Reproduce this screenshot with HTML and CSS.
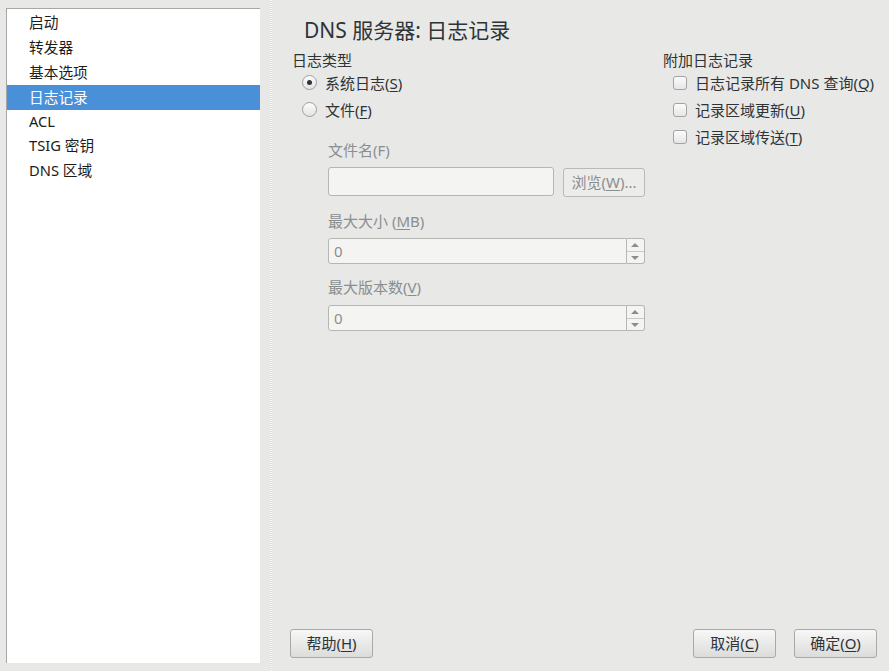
FILE: index.html
```html
<!DOCTYPE html>
<html>
<head>
<meta charset="utf-8">
<link rel="stylesheet" href="styles.css">
</head>
<body>
<div class="window">
  <div class="sidebar">
    <ul class="tree">
      <li>启动</li>
      <li>转发器</li>
      <li>基本选项</li>
      <li class="sel">日志记录</li>
      <li class="latin">ACL</li>
      <li>TSIG 密钥</li>
      <li>DNS 区域</li>
    </ul>
  </div>
  <div class="splitter"></div>
  <div class="main">
    <h1 class="title">DNS 服务器: 日志记录</h1>
    <div class="cols">
      <div class="col-left">
        <div class="group-label">日志类型</div>
        <div class="opt">
          <span class="radio on"></span><span>系统日志(<u>S</u>)</span>
        </div>
        <div class="opt">
          <span class="radio"></span><span>文件(<u>F</u>)</span>
        </div>
        <div class="file-box">
          <div class="flabel">文件名(F)</div>
          <div class="frow">
            <div class="input wide"></div>
            <div class="btn dis">浏览(<u>W</u>)...</div>
          </div>
          <div class="flabel">最大大小 (<u>M</u>B)</div>
          <div class="frow spinrow">
            <div class="input spin">0</div>
            <div class="spinbtn"><span class="up"></span><span class="down"></span></div>
          </div>
          <div class="flabel last">最大版本数(<u>V</u>)</div>
          <div class="frow">
            <div class="input spin">0</div>
            <div class="spinbtn"><span class="up"></span><span class="down"></span></div>
          </div>
        </div>
      </div>
      <div class="col-right">
        <div class="group-label">附加日志记录</div>
        <div class="chk"><span class="box"></span><span>日志记录所有 DNS 查询(<u>Q</u>)</span></div>
        <div class="chk"><span class="box"></span><span>记录区域更新(<u>U</u>)</span></div>
        <div class="chk"><span class="box"></span><span>记录区域传送(<u>T</u>)</span></div>
      </div>
    </div>
    <div class="footer">
      <div class="btn">帮助(<u>H</u>)</div>
      <div class="right-btns">
        <div class="btn">取消(<u>C</u>)</div>
        <div class="btn">确定(<u>O</u>)</div>
      </div>
    </div>
  </div>
</div>
</body>
</html>
```
FILE: styles.css
```css
* { box-sizing: border-box; }
html, body {
  margin: 0;
  padding: 0;
  width: 889px;
  height: 671px;
  overflow: hidden;
  background: #e8e8e7;
  font-family: "Noto Sans", "Noto Sans CJK SC", sans-serif;
  font-size: 15px;
  color: #2e3436;
}
u { text-decoration: underline; text-underline-offset: 2px; text-decoration-thickness: 1px; }
.window {
  display: flex;
  height: 671px;
}
.sidebar {
  padding: 8px 0 8px 6px;
  width: 260px;
  flex: none;
}
.tree {
  list-style: none;
  margin: 0;
  padding: 1px 0 0 0;
  height: 655px;
  background: #fff;
  border-top: 1px solid #a7a7a7;
  border-left: 1px solid #a7a7a7;
  font-size: 14.7px;
}
.tree li {
  height: 25px;
  line-height: 25px;
  padding-left: 22px;
  color: #1c1c1c;
}
.tree li.latin {
  height: 23px;
  line-height: 23px;
}
.tree li.sel {
  background: #4a90d9;
  color: #fff;
}
.splitter {
  width: 20px;
  flex: none;
  position: relative;
}
.splitter::after {
  content: "";
  position: absolute;
  left: 11px;
  top: 0;
  bottom: 0;
  width: 1px;
  background: repeating-linear-gradient(to bottom, #fdfdfd 0 1px, #d8d8d8 1px 2px);
}
.main {
  flex: 1;
  display: flex;
  flex-direction: column;
  padding: 0 12px 13px 10px;
}
.title {
  margin: 0;
  font-weight: normal;
  font-size: 21px;
  line-height: 24px;
  padding: 18px 0 0 14px;
  height: 50px;
  color: #2e3436;
}
.cols {
  display: flex;
  flex: 1;
  padding-left: 2px;
}
.col-left {
  width: 371px;
}
.group-label {
  line-height: 20px;
  height: 19px;
}
.opt {
  display: flex;
  align-items: center;
  height: 27px;
  padding-left: 10px;
}
.radio {
  width: 15px;
  height: 15px;
  border-radius: 50%;
  border: 1px solid #9e9e9e;
  background: linear-gradient(#fdfdfd, #e4e4e4);
  margin-right: 8px;
  position: relative;
  flex: none;
}
.radio.on::after {
  content: "";
  position: absolute;
  left: 4px;
  top: 4px;
  width: 5px;
  height: 5px;
  border-radius: 50%;
  background: #2e3436;
}
.file-box {
  padding-left: 36px;
  padding-top: 14px;
}
.flabel {
  color: #8b8e8f;
  line-height: 20px;
  height: 30px;
  padding-top: 3px;
}
.flabel.last { height: 31px; }
.frow {
  display: flex;
  align-items: flex-start;
  margin-bottom: 11px;
}
.frow.spinrow { margin-bottom: 10px; }
.input {
  height: 29px;
  border: 1px solid #b6b6b3;
  border-radius: 3px;
  background: #f4f4f3;
  color: #8b8e8f;
  padding-left: 5px;
  line-height: 27px;
}
.input.wide { width: 226px; margin-right: 9px; }
.input.spin {
  width: 299px;
  height: 26px;
  line-height: 24px;
  border-radius: 3px 0 0 3px;
}
.spinbtn {
  width: 18px;
  height: 26px;
  border: 1px solid #b6b6b3;
  border-left: none;
  border-radius: 0 3px 3px 0;
  background: #f4f4f3;
  display: flex;
  flex-direction: column;
}
.spinbtn span {
  flex: 1;
  position: relative;
}
.spinbtn .up { border-bottom: 1px solid #c9c9c7; }
.spinbtn .up::after, .spinbtn .down::after {
  content: "";
  position: absolute;
  left: 4px;
  width: 0;
  height: 0;
  border-left: 4px solid transparent;
  border-right: 4px solid transparent;
}
.spinbtn .up::after { top: 4px; border-bottom: 4px solid #8b8e8f; }
.spinbtn .down::after { top: 4px; border-top: 4px solid #8b8e8f; }
.chk {
  display: flex;
  align-items: center;
  height: 27px;
  padding-left: 10px;
  white-space: nowrap;
}
.box {
  width: 14px;
  height: 14px;
  border: 1px solid #a3a3a3;
  border-radius: 3px;
  background: linear-gradient(#fbfbfb, #e6e6e6);
  margin-right: 8px;
  flex: none;
}
.footer {
  display: flex;
  justify-content: space-between;
  align-items: center;
}
.right-btns { display: flex; gap: 18px; }
.btn {
  width: 83px;
  height: 29px;
  border: 1px solid #a9a9a7;
  border-radius: 3px;
  background: linear-gradient(#f7f7f7, #dcdcdb);
  text-align: center;
  line-height: 27px;
  color: #2e3436;
  white-space: nowrap;
}
.btn.dis {
  width: 82px;
  height: 29px;
  color: #8b8e8f;
  background: #ececeb;
  border-color: #b9b9b7;
  line-height: 27px;
  margin-top: 1px;
}
```
